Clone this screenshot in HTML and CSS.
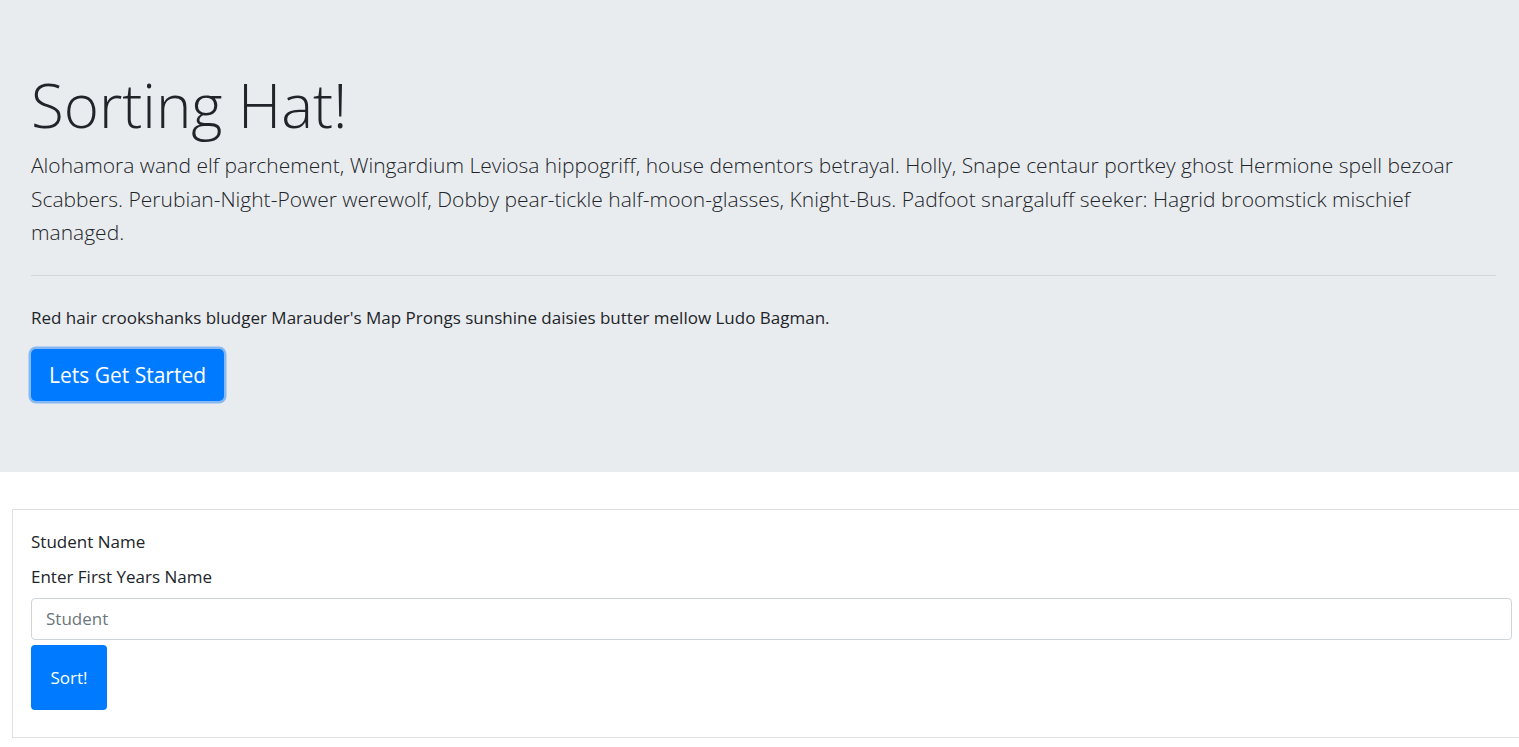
FILE: index.html
```html
<!DOCTYPE html>
<html lang="en">
<head>
<meta charset="utf-8">
<title>Sorting Hat</title>
<link rel="stylesheet" href="styles.css">
</head>
<body>
<div class="jumbotron">
  <h1 class="display">Sorting Hat!</h1>
  <p class="lead">Alohamora wand elf parchement, Wingardium Leviosa hippogriff, house dementors betrayal. Holly, Snape centaur portkey ghost Hermione spell bezoar Scabbers. Perubian-Night-Power werewolf, Dobby pear-tickle half-moon-glasses, Knight-Bus. Padfoot snargaluff seeker: Hagrid broomstick mischief managed.</p>
  <hr class="divider">
  <p class="text">Red hair crookshanks bludger Marauder's Map Prongs sunshine daisies butter mellow Ludo Bagman.</p>
  <button class="btn btn-lg" type="button">Lets Get Started</button>
</div>
<div class="card">
  <form class="card-body">
    <label class="label" for="student">Student Name</label>
    <p class="hint">Enter First Years Name</p>
    <input class="input" id="student" type="text" placeholder="Student">
    <button class="btn btn-sort" type="button">Sort!</button>
  </form>
</div>
</body>
</html>
```
FILE: styles.css
```css
html, body {
  margin: 0;
  padding: 0;
}
body {
  font-family: "Open Sans", "Liberation Sans", sans-serif;
  font-size: 17px;
  line-height: 26.4px;
  color: #212529;
  background: #fff;
  overflow-x: hidden;
}
.jumbotron {
  background: #e9ecef;
  padding: 66px 23px 71px 31px;
  display: flex;
  flex-direction: column;
  align-items: flex-start;
}
.display {
  margin: 0 0 5px;
  font-size: 60px;
  font-weight: 300;
  line-height: 78px;
}
.lead {
  margin: 0;
  font-size: 21px;
  font-weight: 300;
  line-height: 33.5px;
}
.divider {
  align-self: stretch;
  margin: 25px 0 29px;
  border: 0;
  border-top: 1px solid #d3d6d9;
  height: 0;
}
.text {
  margin: 0 0 18px;
}
.btn {
  font-family: inherit;
  border: 0;
  color: #fff;
  background: #007bff;
  cursor: pointer;
}
.btn-lg {
  font-size: 21px;
  line-height: 30px;
  padding: 11px 18px;
  border-radius: 5px;
  box-shadow: 0 0 0 2.5px #86b9f3;
}
.card {
  margin: 37px -13px 0 12px;
  border: 1px solid #dfdfdf;
}
.card-body {
  padding: 19px 19px 27px 18px;
  display: flex;
  flex-direction: column;
  align-items: flex-start;
}
.label {
  display: block;
  margin: 0 0 9px;
}
.hint {
  margin: 0 0 7px;
}
.input {
  align-self: stretch;
  box-sizing: border-box;
  height: 42px;
  padding: 0 14px;
  font-family: inherit;
  font-size: 17px;
  color: #495057;
  border: 1px solid #ced4da;
  border-radius: 4px;
  background: #fff;
  margin: 0 0 5px;
}
.input::placeholder {
  color: #6c757d;
}
.btn-sort {
  width: 76px;
  height: 65px;
  font-size: 17px;
  border-radius: 4px;
  padding: 0;
}
```
